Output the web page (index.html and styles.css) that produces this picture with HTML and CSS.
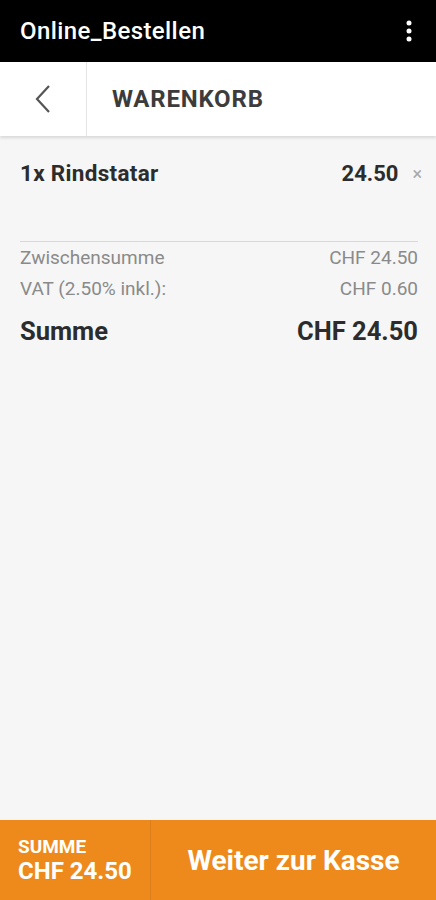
FILE: index.html
```html
<!DOCTYPE html>
<html>
<head>
<meta charset="utf-8">
<link rel="stylesheet" href="styles.css">
</head>
<body>
<div class="app">
  <div class="topbar">
    <span class="title">Online_Bestellen</span>
    <svg class="more" width="6" height="22" viewBox="0 0 6 22"><circle cx="3" cy="3" r="2.5" fill="#fff"/><circle cx="3" cy="11" r="2.5" fill="#fff"/><circle cx="3" cy="19" r="2.5" fill="#fff"/></svg>
  </div>
  <div class="header">
    <div class="back">
      <svg width="18" height="30" viewBox="0 0 18 30"><path d="M15 2 L3 15 L15 28" fill="none" stroke="#555" stroke-width="2.2"/></svg>
    </div>
    <div class="htitle">WARENKORB</div>
  </div>
  <div class="content">
    <div class="item">
      <span class="iname">1x Rindstatar</span>
      <span class="iprice">24.50</span>
      <span class="remove">×</span>
    </div>
    <div class="totals">
      <div class="row sub"><span>Zwischensumme</span><span>CHF 24.50</span></div>
      <div class="row sub"><span>VAT (2.50% inkl.):</span><span>CHF 0.60</span></div>
      <div class="row total"><span>Summe</span><span>CHF 24.50</span></div>
    </div>
  </div>
  <div class="footer">
    <div class="fsum">
      <div class="flabel">SUMME</div>
      <div class="famount">CHF 24.50</div>
    </div>
    <div class="fbtn">Weiter zur Kasse</div>
  </div>
</div>
</body>
</html>
```
FILE: styles.css
```css
* { box-sizing: border-box; }
html, body { margin: 0; padding: 0; }
body { font-family: Roboto, "Liberation Sans", sans-serif; background: #f6f6f6; }
.app { width: 436px; height: 900px; display: flex; flex-direction: column; }
.topbar { height: 62px; background: #000; color: #fff; display: flex; align-items: center; justify-content: space-between; padding: 0 24px 0 20px; }
.title { font-size: 24px; font-weight: 500; letter-spacing: 0.4px; }
.header { height: 74px; background: #fff; display: flex; box-shadow: 0 2px 3px rgba(0,0,0,0.12); position: relative; z-index: 1; }
.back { width: 87px; border-right: 1px solid #e4e4e4; display: flex; align-items: center; justify-content: center; }
.htitle { display: flex; align-items: center; padding-left: 25px; font-size: 24px; font-weight: 700; color: #3c3c3c; letter-spacing: 0.8px; }
.content { flex: 1; padding: 0 18px 0 20px; }
.item { display: flex; align-items: center; height: 74px; }
.iname { flex: 1; font-size: 22.5px; font-weight: 700; color: #2c2c2c; letter-spacing: 0.3px; }
.iprice { font-size: 22px; font-weight: 700; color: #2c2c2c; }
.remove { margin-left: 14px; font-size: 18px; color: #aaa; margin-right: -4px; }
.totals { margin-top: 31px; border-top: 1px solid #d8d8d8; }
.row { display: flex; justify-content: space-between; }
.sub { font-size: 19px; color: #8a8a8a; height: 31px; align-items: center; }
.total { font-size: 25.5px; font-weight: 700; color: #2c2c2c; margin-top: 10px; height: 34px; align-items: center; }
.footer { height: 80px; background: #ee8a1c; display: flex; color: #fff; }
.fsum { width: 151px; border-right: 1px solid #dd7f18; padding: 16px 0 0 18px; }
.flabel { font-size: 19px; font-weight: 700; line-height: 22px; }
.famount { font-size: 24px; font-weight: 700; line-height: 27px; }
.fbtn { flex: 1; display: flex; align-items: center; justify-content: center; font-size: 28px; font-weight: 700; }
```
